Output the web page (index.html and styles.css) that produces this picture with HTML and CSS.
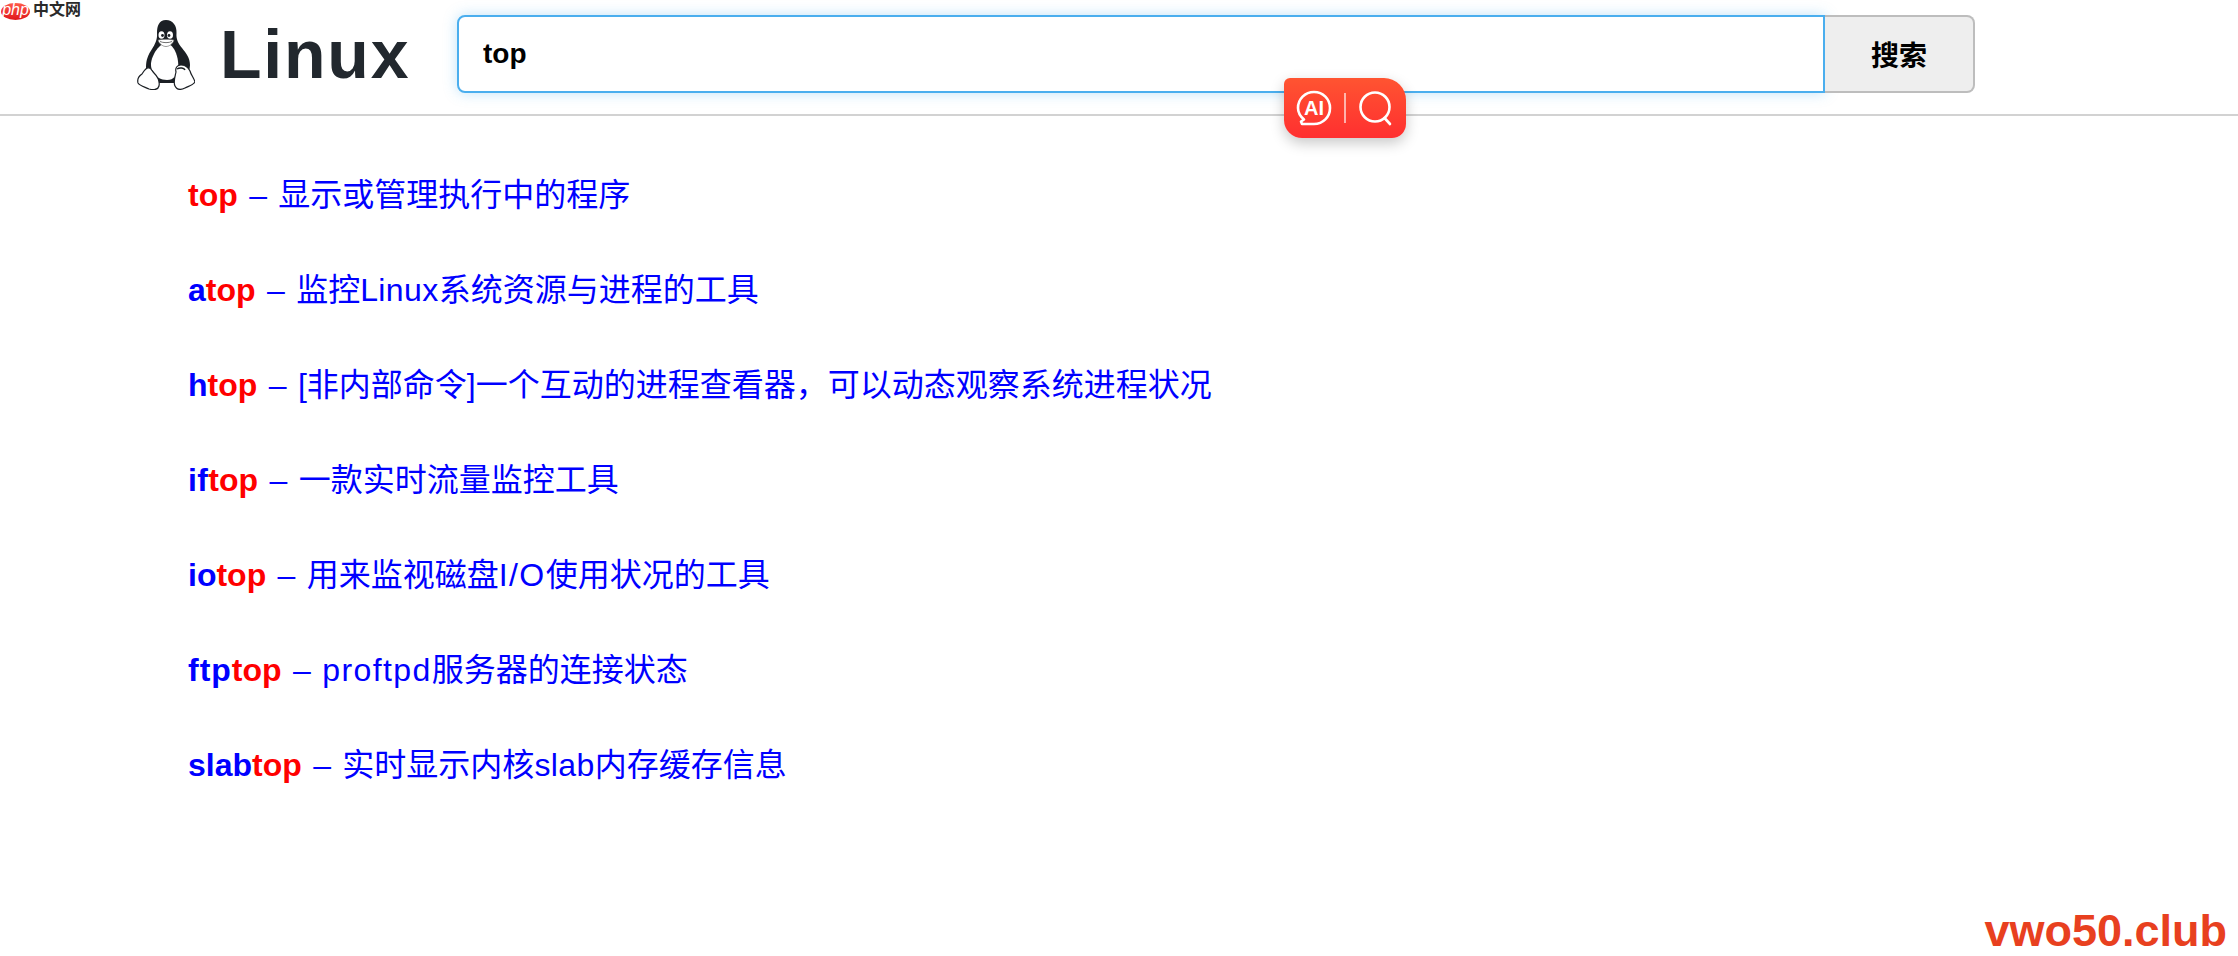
FILE: index.html
```html
<!DOCTYPE html>
<html lang="zh">
<head>
<meta charset="utf-8">
<title>Linux top</title>
<link rel="stylesheet" href="styles.css">
</head>
<body>
<a class="php-badge" href="#"><span class="php-oval">php</span><span class="php-cn">中文网</span></a>
<header class="top-bar">
  <a class="brand" href="#">
    <svg class="tux" viewBox="0 0 58 70" width="58" height="70">
      <path d="M29 0C22 0 20 6 20 13C20.500 20 18 24 15 29C11 35 9 40 9 47C9 54 13 62 20 63L38 63C46 62 53 54 53 45C53 38 49 33 45 28C41 23 39 19 39.500 13C40 6 36 0 29 0Z" fill="#1b1f24"/>
      <path d="M29 23C24 24 20 28 17 34C14 40 13 45 15 50C18 57 24 60 30 60C37 60 40 55 41 49C42 42 40 34 37 29C35 26 32 23 29 23Z" fill="#fff"/>
      <ellipse cx="24.500" cy="15" rx="3" ry="3.800" fill="#fff"/>
      <ellipse cx="33" cy="15" rx="3" ry="3.800" fill="#fff"/>
      <circle cx="25.500" cy="15.500" r="1.400" fill="#1b1f24"/>
      <circle cx="32" cy="15.500" r="1.400" fill="#1b1f24"/>
      <path d="M21 20C25 19 33 19 37 20C36 24 32 26.500 29 26.500C26 26.500 22 24 21 20Z" fill="#fff" stroke="#555" stroke-width=".6"/>
      <path d="M23 21.500C26 23 32 23 35 21.500" fill="none" stroke="#333" stroke-width=".7"/>
      <path d="M12 48C9 47 7 51 5 54C2 56 0 59 1 63C3 66 8 67 12 69C16 70 21 70 22 66C23 61 20 56 17 53C15 51 14 48 12 48Z" fill="#fff" stroke="#1b1f24" stroke-width="1.200"/>
      <path d="M44 45C40 45 38 48 39 52C38 57 36 62 38 66C40 70 44 70 48 68C52 66 56 65 58 62C57 58 54 55 53 51C51 47 48 45 44 45Z" fill="#fff" stroke="#1b1f24" stroke-width="1.200"/>
      <path d="M40 49C43 47 47 48 48 50" fill="none" stroke="#1b1f24" stroke-width="1.500"/>
    </svg>
    <span class="brand-name">Linux</span>
  </a>
  <form class="search">
    <input class="search-input" type="text" value="top">
    <button class="search-btn" type="button">搜索</button>
  </form>
</header>
<div class="ai-pill">
  <svg viewBox="0 0 36 36" width="36" height="36">
    <path d="M8 29.500C4.500 26.500 2 22.500 2 18C2 9 9 2 18 2C27 2 34 9 34 18C34 27 27 34 18 34L6 34L5 31.500Z" fill="none" stroke="#fff" stroke-width="2.600" stroke-linejoin="round"/>
    <text class="ai-text" x="18" y="25" text-anchor="middle">AI</text>
  </svg>
  <span class="ai-sep"></span>
  <svg viewBox="0 0 36 36" width="36" height="36">
    <circle cx="17" cy="17" r="14.500" fill="none" stroke="#fff" stroke-width="2.600"/>
    <path d="M26.500 28L32 34" stroke="#fff" stroke-width="2.600" stroke-linecap="round"/>
  </svg>
</div>
<ul class="results">
  <li><a href="#"><b class="hit">top</b> – 显示或管理执行中的程序</a></li>
  <li><a href="#"><b>a</b><b class="hit">top</b> – 监控<span class="lat-sm">Linux</span>系统资源与进程的工具</a></li>
  <li><a href="#"><b>h</b><b class="hit">top</b> – [非内部命令]一个互动的进程查看器，可以动态观察系统进程状况</a></li>
  <li><a href="#"><b class="lat-sm">if</b><b class="hit">top</b> – 一款实时流量监控工具</a></li>
  <li><a href="#"><b>io</b><b class="hit">top</b> – 用来监视磁盘<span class="lat">I/O</span>使用状况的工具</a></li>
  <li><a href="#"><b class="lat-b">ftp</b><b class="hit">top</b> – <span class="lat">proftpd</span>服务器的连接状态</a></li>
  <li><a href="#"><b>slab</b><b class="hit">top</b> – 实时显示内核<span class="lat-sm">slab</span>内存缓存信息</a></li>
</ul>
<div class="watermark">vwo50.club</div>
</body>
</html>
```
FILE: styles.css
```css
* { box-sizing: border-box; }
html, body { margin: 0; height: 100%; }
body {
  position: relative;
  overflow: hidden;
  background: #fff;
  font-family: "Liberation Sans", "Noto Sans CJK SC", sans-serif;
}
a { text-decoration: none; }

.php-badge {
  position: absolute;
  left: 1px;
  top: 3px;
  display: flex;
  align-items: center;
  gap: 3px;
}
.php-oval {
  width: 29px;
  height: 17px;
  border-radius: 50%;
  background: linear-gradient(#ff5a4a, #e0161c);
  color: #fff;
  font-size: 16px;
  font-style: italic;
  line-height: 14px;
  text-align: center;
}
.php-cn {
  color: #2a2a2a;
  font-size: 16px;
  font-weight: 700;
  line-height: 16px;
  margin-top: -3px;
}

.top-bar {
  display: flex;
  align-items: center;
  height: 116px;
  padding: 0 0 7px 137px;
  border-bottom: 2px solid #d2d2d2;
}
.brand {
  display: flex;
  align-items: center;
  gap: 25px;
  width: 320px;
}
.tux { display: block; margin-top: 3px; }
.brand-name {
  color: #22282e;
  font-size: 68px;
  font-weight: 700;
  letter-spacing: 1.800px;
  line-height: 78px;
}
.search { display: flex; height: 78px; }
.search-input {
  width: 1368px;
  height: 78px;
  padding: 0 24px;
  border: 2px solid #4aaeee;
  border-radius: 8px 0 0 8px;
  outline: none;
  box-shadow: 0 0 14px rgba(74, 174, 238, .35);
  color: #000;
  font: 700 28px "Liberation Sans", "Noto Sans CJK SC", sans-serif;
}
.search-btn {
  width: 150px;
  height: 78px;
  border: 2px solid #bdbdbd;
  border-left: 0;
  border-radius: 0 8px 8px 0;
  background: #eee;
  color: #000;
  font: 700 28px "Liberation Sans", "Noto Sans CJK SC", sans-serif;
}

.ai-pill {
  position: absolute;
  left: 1284px;
  top: 78px;
  display: flex;
  align-items: center;
  gap: 12px;
  width: 122px;
  height: 60px;
  padding: 0 0 0 12px;
  border-radius: 6px 22px 14px 18px;
  background: linear-gradient(#ff5431, #ff2f30);
  box-shadow: 0 5px 14px rgba(0, 0, 0, .22);
}
.ai-text {
  fill: #fff;
  font-size: 20px;
  font-weight: 700;
}
.ai-sep {
  width: 2px;
  height: 30px;
  background: rgba(255, 255, 255, .6);
}

.results {
  margin: 0;
  padding: 32px 0 0 188px;
  list-style: none;
}
.results li {
  height: 95px;
  font-size: 32px;
  line-height: 95px;
  word-spacing: 2.500px;
}
.results a { color: #00f; }
.results b { font-weight: 700; }
.results .hit { color: #f00; }
.lat { letter-spacing: 1.400px; }
.lat-sm { letter-spacing: .400px; }
.lat-b { letter-spacing: 1px; }

.watermark {
  position: absolute;
  right: 11px;
  bottom: -3px;
  color: #e8401f;
  font-size: 45px;
  font-weight: 700;
  line-height: 56px;
}
```
